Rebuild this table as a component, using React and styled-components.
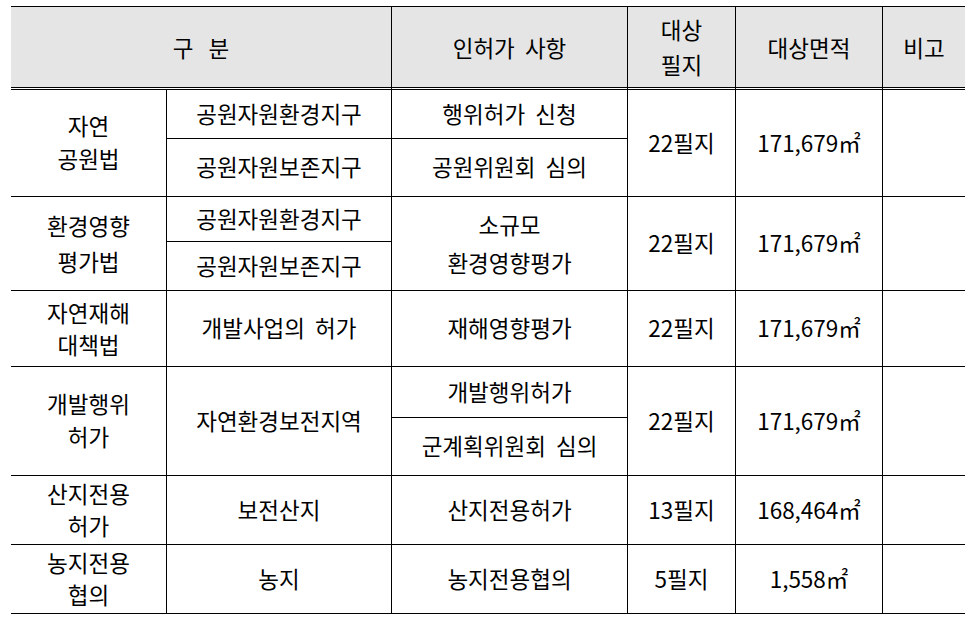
import React from "react";
import styled, { createGlobalStyle } from "styled-components";

const Global = createGlobalStyle`
  html, body { margin: 0; padding: 0; background: #fff; }
  body { font-family: "Noto Sans CJK KR", "Noto Sans", sans-serif; color: #000; }
`;

const COLS = "156px 225px 236px 108px 147px 82px";
const FONT = "22.5px";

const Page = styled.div`
  padding: 6px 13px 0 11px;
  width: 954px;
`;

const HeadGrid = styled.div`
  display: grid;
  grid-template-columns: ${COLS};
  border-top: 1px solid #000;
`;

const HeadCell = styled.div`
  grid-column: span ${(p) => p.$cols || 1};
  height: 83px;
  box-sizing: border-box;
  background: #e5e5e5;
  background-clip: padding-box;
  border-bottom: 3px double #000;
  border-right: ${(p) => (p.$last ? "none" : "1px solid #000")};
  display: flex;
  align-items: center;
  justify-content: center;
  text-align: center;
  font-size: ${FONT};
  line-height: 35px;
  padding-bottom: 0;
  white-space: pre-line;
`;

const BodyGrid = styled.div`
  display: grid;
  grid-template-columns: ${COLS};
  grid-template-rows: 49px 58px 45px 49px 76px 51px 58px 69px 69px;
`;

const Cell = styled.div`
  grid-row: span ${(p) => p.$span || 1};
  box-sizing: border-box;
  border-bottom: 1px solid #000;
  border-right: ${(p) => (p.$last ? "none" : "1px solid #000")};
  display: flex;
  align-items: center;
  justify-content: center;
  text-align: center;
  font-size: ${FONT};
  line-height: ${(p) => p.$lh || 33}px;
  white-space: pre-line;
  padding-bottom: 2px;
`;

const rows = [
  [
    { t: "자연\n공원법", s: 2 },
    { t: "공원자원환경지구" },
    { t: "행위허가  신청" },
    { t: "22필지", s: 2 },
    { t: "171,679㎡", s: 2 },
    { t: "", s: 2, last: true },
  ],
  [{ t: "공원자원보존지구" }, { t: "공원위원회  심의" }],
  [
    { t: "환경영향\n평가법", s: 2, lh: 36 },
    { t: "공원자원환경지구" },
    { t: "소규모\n환경영향평가", s: 2, lh: 38 },
    { t: "22필지", s: 2 },
    { t: "171,679㎡", s: 2 },
    { t: "", s: 2, last: true },
  ],
  [{ t: "공원자원보존지구" }],
  [
    { t: "자연재해\n대책법", lh: 32 },
    { t: "개발사업의  허가" },
    { t: "재해영향평가" },
    { t: "22필지" },
    { t: "171,679㎡" },
    { t: "", last: true },
  ],
  [
    { t: "개발행위\n허가", s: 2 },
    { t: "자연환경보전지역", s: 2 },
    { t: "개발행위허가" },
    { t: "22필지", s: 2 },
    { t: "171,679㎡", s: 2 },
    { t: "", s: 2, last: true },
  ],
  [{ t: "군계획위원회  심의" }],
  [
    { t: "산지전용\n허가", lh: 32 },
    { t: "보전산지" },
    { t: "산지전용허가" },
    { t: "13필지" },
    { t: "168,464㎡" },
    { t: "", last: true },
  ],
  [
    { t: "농지전용\n협의", lh: 32 },
    { t: "농지" },
    { t: "농지전용협의" },
    { t: "5필지" },
    { t: "1,558㎡" },
    { t: "", last: true },
  ],
];

export default function App() {
  return (
    <>
      <Global />
      <Page>
        <HeadGrid>
          <HeadCell $cols={2}>{"구\u00a0\u00a0\u00a0분"}</HeadCell>
          <HeadCell>{"인허가\u00a0 사항"}</HeadCell>
          <HeadCell>{"대상\n필지"}</HeadCell>
          <HeadCell>대상면적</HeadCell>
          <HeadCell $last>비고</HeadCell>
        </HeadGrid>
        <BodyGrid>
          {rows.flat().map((c, i) => (
            <Cell key={i} $span={c.s} $last={c.last} $lh={c.lh}>
              {c.t.replace(/  /g, " \u00a0")}
            </Cell>
          ))}
        </BodyGrid>
      </Page>
    </>
  );
}
